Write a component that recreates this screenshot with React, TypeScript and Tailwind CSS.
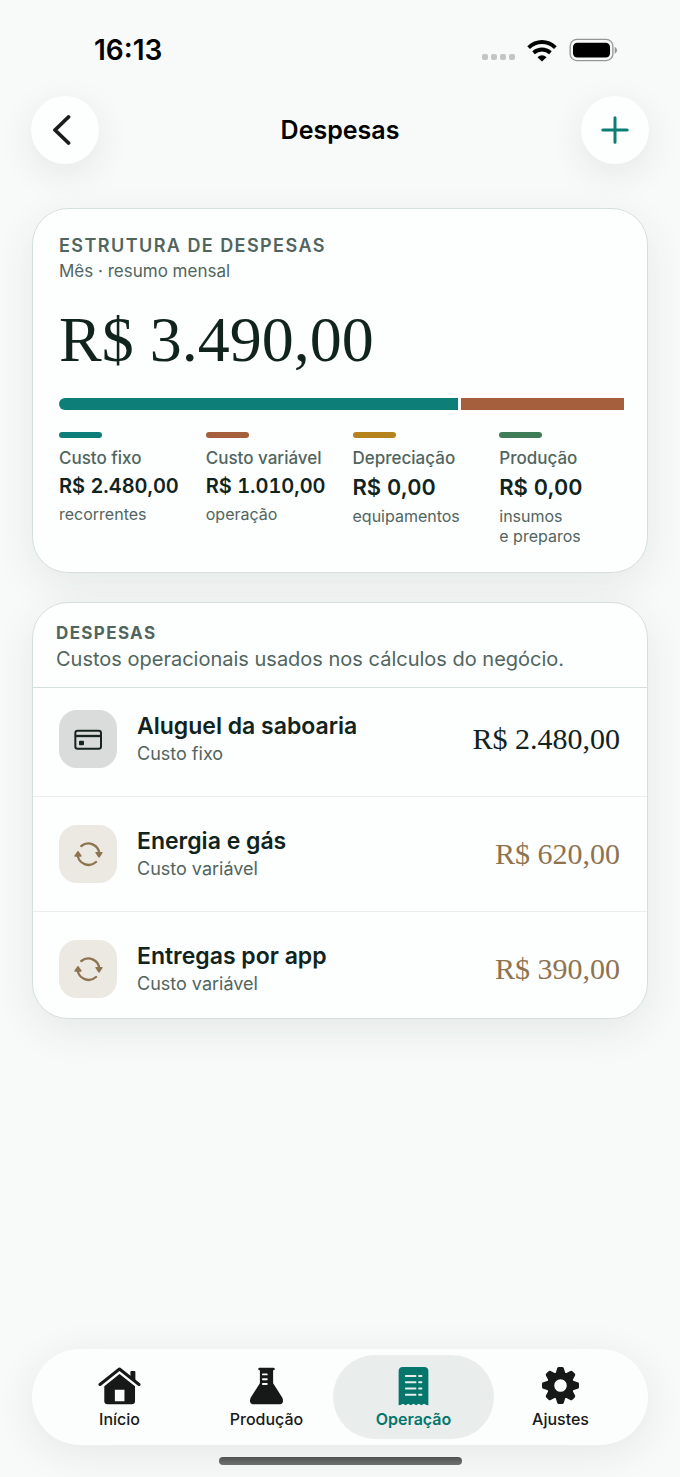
import type { ReactNode } from "react";
import clsx from "clsx";

type Category = {
  label: string;
  value: string;
  hint: string;
  color: string;
  large?: boolean;
};

type Expense = {
  name: string;
  kind: "fixed" | "variable";
  amount: string;
};

const categories: Category[] = [
  { label: "Custo fixo", value: "R$ 2.480,00", hint: "recorrentes", color: "bg-[#0e7f78]" },
  { label: "Custo variável", value: "R$ 1.010,00", hint: "operação", color: "bg-[#a65f3c]" },
  { label: "Depreciação", value: "R$ 0,00", hint: "equipamentos", color: "bg-[#b5821b]", large: true },
  { label: "Produção", value: "R$ 0,00", hint: "insumos\ne preparos", color: "bg-[#3f7d58]", large: true },
];

const segments = [
  { amount: 2480, className: "rounded-l-full bg-[#0e7f78]" },
  { amount: 1010, className: "bg-[#a65f3c]" },
];

const expenses: Expense[] = [
  { name: "Aluguel da saboaria", kind: "fixed", amount: "R$ 2.480,00" },
  { name: "Energia e gás", kind: "variable", amount: "R$ 620,00" },
  { name: "Entregas por app", kind: "variable", amount: "R$ 390,00" },
];

const SignalDots = () => (
  <div className="flex gap-[3px] pt-[14px]">
    {[0, 1, 2, 3].map((i) => (
      <span key={i} className="size-[6px] rounded-[2px] bg-[#c3c5c4]" />
    ))}
  </div>
);

const WifiIcon = () => (
  <svg viewBox="562 112 92 70" className="h-[23px] w-[30px]" fill="none" stroke="#000" strokeWidth="12">
    <path d="M567 138Q585 121 608 121T649 138" />
    <path d="M582 154Q594 144 608 144T634 154" />
    <path d="M594 168Q608 155 622 168L608 181Z" fill="#000" stroke="none" />
  </svg>
);

const BatteryIcon = () => (
  <svg viewBox="686 112 148 72" className="h-6 w-[49px]">
    <rect x="689.500" y="116" width="129" height="64" rx="20" fill="none" stroke="#949695" strokeWidth="4" />
    <rect x="698" y="126" width="112" height="45" rx="13" fill="#000" />
    <path d="M824 138q7 4 7 11t-7 11z" fill="#949695" />
  </svg>
);

const BackIcon = () => (
  <svg viewBox="0 0 20 32" className="mr-2 h-8 w-5" fill="none" stroke="#1a1c1b" strokeWidth="3.800" strokeLinecap="round" strokeLinejoin="round">
    <path d="M17.500 3L4 16l13.500 13" />
  </svg>
);

const PlusIcon = () => (
  <svg viewBox="0 0 28 28" className="size-7" fill="none" stroke="#0b7f75" strokeWidth="3" strokeLinecap="round">
    <path d="M14 1.800v24.400M1.800 14h24.400" />
  </svg>
);

const CardIcon = () => (
  <svg viewBox="162 416 84 62" className="h-[21px] w-7" fill="none" stroke="#16261f" strokeWidth="6">
    <rect x="166" y="420.500" width="77" height="54.500" rx="7" />
    <path d="M166 436.500h77" strokeWidth="7" />
    <rect x="177" y="451" width="15" height="13" rx="3" fill="#16261f" stroke="none" />
  </svg>
);

const CycleIcon = () => (
  <svg viewBox="160 122 87 78" className="h-[26px] w-[29px]" fill="none" stroke="#8e7350" strokeWidth="7" strokeLinecap="round">
    <path d="M182 137A33 33 0 0 1 236 160" />
    <path d="M226 185A33 33 0 0 1 171 164" />
    <path d="M226 157h18l-9 13z" fill="#8e7350" strokeWidth="4" strokeLinejoin="round" />
    <path d="M163 167h18l-9-13z" fill="#8e7350" strokeWidth="4" strokeLinejoin="round" />
  </svg>
);

const HomeIcon = () => (
  <svg viewBox="235 108 130 118" className="h-[39px] w-[43px]" fill="#171918">
    <path d="M333 126q0-3 3-3h9q3 0 3 3v31l-15-12z" />
    <path d="M241 164l59-47 59 47" fill="none" stroke="#171918" strokeWidth="9" strokeLinecap="round" strokeLinejoin="round" />
    <path
      fillRule="evenodd"
      d="M254 169l46-37 47 37v45q0 10-10 10h-73q-10 0-10-10zM286 180v35h29v-35z"
    />
  </svg>
);

const FlaskIcon = () => (
  <svg viewBox="680 108 118 118" className="size-[39px]" fill="#171918">
    <path d="M718 113h42q4 0 4 4t-4 4h-1v39l28 44q7 20-11 20h-74q-18 0-11-20l28-44v-39h-1q-4 0-4-4t4-4z" />
    <path d="M728 133.500h12M728 148h12M728 162.500h12" stroke="#fcfefd" strokeWidth="5.500" strokeLinecap="round" />
  </svg>
);

const ReceiptIcon = () => (
  <svg viewBox="223 108 118 121" className="h-10 w-[39px]" fill="#04766c">
    <path d="M237 124q0-13 13-13h64q13 0 13 13v103l-6-1-7-4-8 5-8-5-8 5-8-5-8 5-8-5-8 5-8-5-7 4-6 1z" />
    <path
      d="M259 138.500h29M259 157h29M259 176h29M259 195h29M299 138.500h7M299 157h7M299 176h7M299 195h7"
      stroke="#e9eeec"
      strokeWidth="6"
      strokeLinecap="round"
    />
  </svg>
);

const GearIcon = () => (
  <svg viewBox="-59 -59 118 118" className="size-[39px]" fill="#171918">
    <circle r="30" fill="none" stroke="#171918" strokeWidth="22" />
    {[0, 45, 90, 135, 180, 225, 270, 315].map((angle) => (
      <path key={angle} d="M-15-36L-10-52Q-9-56-5-56H5Q9-56 10-52L15-36z" transform={`rotate(${angle})`} />
    ))}
  </svg>
);

const tabs: { label: string; icon: ReactNode; active?: boolean }[] = [
  { label: "Início", icon: <HomeIcon /> },
  { label: "Produção", icon: <FlaskIcon /> },
  { label: "Operação", icon: <ReceiptIcon />, active: true },
  { label: "Ajustes", icon: <GearIcon /> },
];

const StatusBar = () => (
  <div className="flex items-center justify-between pt-8 pr-[62px] pb-7 pl-[94px]">
    <span className="text-[28px] leading-9 font-semibold text-black">16:13</span>
    <div className="flex items-center gap-3">
      <SignalDots />
      <WifiIcon />
      <BatteryIcon />
    </div>
  </div>
);

const RoundButton = ({ label, children }: { label: string; children: ReactNode }) => (
  <button
    type="button"
    aria-label={label}
    className="flex size-[68px] items-center justify-center rounded-full bg-[#fdfffe] shadow-[0_10px_36px_rgba(20,40,35,0.09)]"
  >
    {children}
  </button>
);

const Summary = () => (
  <section className="rounded-[36px] border border-[#d5e0dd] bg-[#fdfefe] pt-[25px] pr-[23px] pb-[26px] pl-[26px] shadow-[0_12px_40px_rgba(20,50,45,0.09)]">
    <h2 className="text-lg leading-6 font-semibold tracking-[0.08em] text-[#51655f] uppercase">Estrutura de despesas</h2>
    <p className="text-[17px] leading-[26px] text-[#51655f]">Mês · resumo mensal</p>
    <p className="mt-4 font-['Liberation_Serif',serif] text-[64px] leading-20 text-[#10231d]">R$ 3.490,00</p>

    <div className="mt-[18px] flex h-3 gap-[3px]">
      {segments.map((segment) => (
        <div key={segment.amount} className={segment.className} style={{ flexGrow: segment.amount }} />
      ))}
    </div>

    <ul className="mt-[22px] grid grid-cols-4 gap-x-[22px]">
      {categories.map((category) => (
        <li key={category.label} className="whitespace-nowrap">
          <div className={clsx("h-[6px] w-[43px] rounded-full", category.color)} />
          <p className="mt-2 text-[17px] leading-6 font-medium text-[#51655f]">{category.label}</p>
          <p
            className={clsx(
              "mt-[2px] font-semibold text-[#10231d] tabular-nums",
              category.large ? "text-[22px] leading-[30px]" : "text-[20px] leading-7"
            )}
          >
            {category.value}
          </p>
          <p className="mt-1 text-base leading-5 whitespace-pre-line text-[#51655f]">{category.hint}</p>
        </li>
      ))}
    </ul>
  </section>
);

const ExpenseRow = ({ expense }: { expense: Expense }) => {
  const fixed = expense.kind === "fixed";

  return (
    <li className="flex items-center py-7 pr-[27px] pl-[26px] first:pt-[22px] last:pb-5">
      <div
        className={clsx(
          "flex size-[58px] shrink-0 items-center justify-center rounded-[18px]",
          fixed ? "bg-[#d9dcdb]" : "bg-[#ece8e2]"
        )}
      >
        {fixed ? <CardIcon /> : <CycleIcon />}
      </div>
      <div className="ml-5 min-w-0 flex-1">
        <h3 className="text-[23px] leading-[30px] font-semibold text-[#10231d]">{expense.name}</h3>
        <p className="text-lg leading-[26px] text-[#51655f]">{fixed ? "Custo fixo" : "Custo variável"}</p>
      </div>
      <p
        className={clsx(
          "font-['Liberation_Serif',serif] text-[30px] leading-9 whitespace-nowrap",
          fixed ? "text-[#10231d]" : "text-[#8e7350]"
        )}
      >
        {expense.amount}
      </p>
    </li>
  );
};

const ExpenseList = () => (
  <section className="mt-[29px] rounded-[36px] border border-[#d5e0dd] bg-[#fdfefe] shadow-[0_12px_40px_rgba(20,50,45,0.09)]">
    <header className="border-b border-[#d5e0dd] px-[23px] pt-[18px] pb-[14px]">
      <h2 className="text-[17px] leading-6 font-bold tracking-[0.08em] text-[#51655f] uppercase">Despesas</h2>
      <p className="text-[20px] leading-7 text-[#51655f]">Custos operacionais usados nos cálculos do negócio.</p>
    </header>
    <ul className="divide-y divide-[#e9eeec]">
      {expenses.map((expense) => (
        <ExpenseRow key={expense.name} expense={expense} />
      ))}
    </ul>
  </section>
);

const TabBar = () => (
  <nav className="grid grid-cols-4 rounded-full bg-[#fcfefd] px-[14px] py-[6px] shadow-[0_8px_40px_rgba(20,40,35,0.09)]">
    {tabs.map((tab) => (
      <a
        key={tab.label}
        href="#"
        aria-current={tab.active ? "page" : undefined}
        className={clsx(
          "-mx-[7px] flex h-[84px] flex-col items-center rounded-full pt-[11px] text-base leading-5",
          tab.active ? "bg-[#e9eeec] font-semibold text-[#04766c]" : "font-medium text-[#171918]"
        )}
      >
        <span className="flex h-[43px] items-start">{tab.icon}</span>
        {tab.label}
      </a>
    ))}
  </nav>
);

export default function App() {
  return (
    <div className="flex min-h-screen flex-col overflow-hidden bg-[#f8faf9] font-[Inter,sans-serif]">
      <StatusBar />

      <header className="flex items-center justify-between px-[31px]">
        <RoundButton label="Voltar">
          <BackIcon />
        </RoundButton>
        <h1 className="text-[25px] leading-8 font-semibold text-black">Despesas</h1>
        <RoundButton label="Adicionar despesa">
          <PlusIcon />
        </RoundButton>
      </header>

      <main className="px-8 pt-11 pb-10">
        <Summary />
        <ExpenseList />
      </main>

      <footer className="mt-auto px-8 pb-3">
        <TabBar />
        <div className="mx-auto mt-3 h-2 w-[243px] rounded-full bg-linear-to-b from-[#4f5352] to-[#6e7170]" />
      </footer>
    </div>
  );
}
